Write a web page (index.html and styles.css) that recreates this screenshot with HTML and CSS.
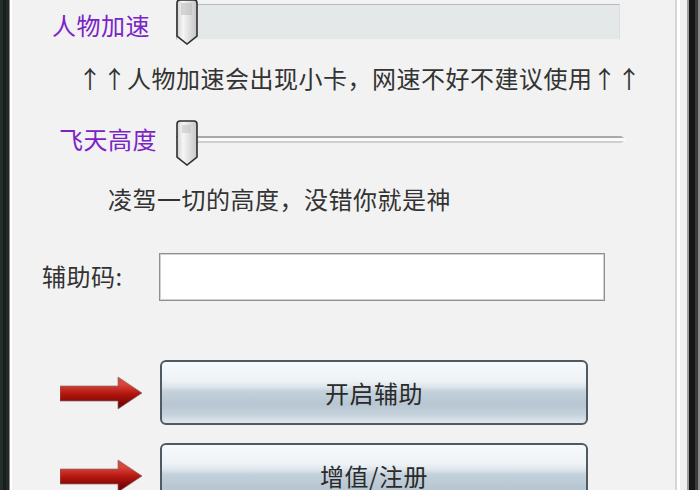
FILE: index.html
```html
<!DOCTYPE html>
<html lang="zh-CN">
<head>
<meta charset="utf-8">
<title>辅助</title>
<link rel="stylesheet" href="styles.css">
</head>
<body>
<div class="window">
  <div class="frame-l"></div>
  <div class="panel">
    <div class="row r1">
      <span class="label l1">人物加速</span>
      <div class="slider s1">
        <div class="track-box"></div>
        <svg class="thumb t1" viewBox="0 0 22 46" width="22" height="46">
          <defs>
            <linearGradient id="tg1" x1="0" y1="0" x2="1" y2="0">
              <stop offset="0" stop-color="#d2d2d2"/>
              <stop offset="0.3" stop-color="#f6f6f6"/>
              <stop offset="0.6" stop-color="#e0e0e0"/>
              <stop offset="1" stop-color="#c4c4c4"/>
            </linearGradient>
          </defs>
          <path d="M4,1 H18 Q21,1 21,4 V37 L11,45 L1,37 V4 Q1,1 4,1 Z" fill="url(#tg1)" stroke="#2e2e2e" stroke-width="1.6"/>
          <rect x="5" y="4" width="11" height="12" fill="#b9b9b9" opacity="0.55"/>
        </svg>
      </div>
    </div>
    <p class="note n1">↑↑人物加速会出现小卡，网速不好不建议使用↑↑</p>
    <div class="row r3">
      <span class="label l2">飞天高度</span>
      <div class="slider s2">
        <div class="groove"></div>
        <svg class="thumb t2" viewBox="0 0 22 46" width="22" height="46">
          <defs>
            <linearGradient id="tg2" x1="0" y1="0" x2="1" y2="0">
              <stop offset="0" stop-color="#d2d2d2"/>
              <stop offset="0.3" stop-color="#f6f6f6"/>
              <stop offset="0.6" stop-color="#e2e2e2"/>
              <stop offset="1" stop-color="#c6c6c6"/>
            </linearGradient>
          </defs>
          <path d="M4,1 H18 Q21,1 21,4 V37 L11,45 L1,37 V4 Q1,1 4,1 Z" fill="url(#tg2)" stroke="#2e2e2e" stroke-width="1.6"/>
          <rect x="6" y="5" width="9" height="8" fill="#bdbdbd" opacity="0.5"/>
        </svg>
      </div>
    </div>
    <p class="note n2">凌驾一切的高度，没错你就是神</p>
    <div class="row r5">
      <label class="code-label" for="code">辅助码:</label>
      <input class="code-input" id="code" type="text">
    </div>
    <div class="row btn-row b1">
      <svg class="arrow" viewBox="0 0 82 65" width="82" height="65">
        <defs>
          <linearGradient id="ag1" gradientUnits="userSpaceOnUse" x1="0" y1="24" x2="0" y2="44">
            <stop offset="0" stop-color="#d8463c"/>
            <stop offset="0.5" stop-color="#b2160f"/>
            <stop offset="1" stop-color="#760505"/>
          </linearGradient>
        </defs>
        <path d="M0,26 H58 V17 L82,33 L58,49 V41 H0 Z" fill="url(#ag1)" stroke="#8d6b6b" stroke-width="0.7"/>
      </svg>
      <button class="btn" type="button">开启辅助</button>
    </div>
    <div class="row btn-row b2">
      <svg class="arrow" viewBox="0 0 82 65" width="82" height="65">
        <defs>
          <linearGradient id="ag2" gradientUnits="userSpaceOnUse" x1="0" y1="24" x2="0" y2="44">
            <stop offset="0" stop-color="#d8463c"/>
            <stop offset="0.5" stop-color="#b2160f"/>
            <stop offset="1" stop-color="#760505"/>
          </linearGradient>
        </defs>
        <path d="M0,26 H58 V17 L82,33 L58,49 V41 H0 Z" fill="url(#ag2)" stroke="#8d6b6b" stroke-width="0.7"/>
      </svg>
      <button class="btn" type="button">增值/注册</button>
    </div>
  </div>
  <div class="gutter"></div>
  <div class="frame-r"></div>
</div>
</body>
</html>
```
FILE: styles.css
```css
html, body {
  margin: 0;
  padding: 0;
  width: 700px;
  height: 490px;
  overflow: hidden;
  background: #f2f2f2;
}

body {
  font-family: "Noto Sans CJK SC", "Noto Sans", sans-serif;
  font-size: 24px;
  letter-spacing: 0.5px;
  color: #333;
}

.window {
  display: flex;
  width: 700px;
  height: 490px;
}

.frame-l {
  width: 9px;
  flex: none;
  background: linear-gradient(to right, #262c29 0 3px, #13201a 3px 6px, #222926 6px);
}

.panel {
  flex: 1;
  min-width: 0;
  border-left: 1px solid #8c8c8c;
  box-shadow: inset 2px 0 0 #ffffff;
  background: #f2f2f2;
  overflow: hidden;
}

.gutter {
  width: 14px;
  flex: none;
  background: linear-gradient(to right, #d6d6d6 0 2px, #ffffff 2px 5px, #efefef 5px 12px, #9c9c9c 12px 14px);
}

.frame-r {
  width: 11px;
  flex: none;
  background: linear-gradient(to right, #161616 0 6px, #3a3a3a 6px 9px, #8a8a8a 9px);
}

.row {
  display: flex;
}

.label {
  display: block;
  line-height: 24px;
  color: #7b23c6;
  flex: none;
}

.r1 {
  height: 44px;
  align-items: flex-start;
}

.l1 {
  width: 124px;
  padding-left: 42px;
  margin-top: 13px;
}

.slider {
  position: relative;
  flex: none;
}

.s1 {
  width: 444px;
  height: 44px;
}

.track-box {
  margin-top: 4px;
  height: 36px;
  box-sizing: border-box;
  border: 1px solid;
  border-color: #b6babc #dcdfe0 #eef0f0 #b6babc;
  background: #e5e8e9;
}

.thumb {
  position: absolute;
  left: 0;
  display: block;
}

.t1 {
  top: -1px;
}

.t2 {
  top: 0;
}

.note {
  margin: 22px 0 0;
  line-height: 24px;
  white-space: nowrap;
}

.n1 {
  padding-left: 68px;
}

.r3 {
  margin-top: 30px;
  height: 45px;
  align-items: flex-start;
}

.l2 {
  width: 117px;
  padding-left: 49px;
  margin-top: 7px;
}

.s2 {
  width: 451px;
  height: 45px;
}

.groove {
  margin-top: 16px;
  height: 3px;
  border-top: 2px solid #a9a9a9;
  border-bottom: 2px solid #cfcfcf;
  background: #fafafa;
  clip-path: polygon(0 0, calc(100% - 6px) 0, 100% 50%, calc(100% - 6px) 100%, 0 100%);
}

.n2 {
  padding-left: 98px;
}

.r5 {
  margin-top: 42px;
  height: 48px;
  align-items: center;
}

.code-label {
  display: block;
  flex: none;
  width: 117px;
  padding-left: 32px;
  line-height: 24px;
  margin-bottom: 2px;
  color: #333;
}

.code-input {
  flex: none;
  width: 446px;
  height: 48px;
  margin: 0;
  box-sizing: border-box;
  border: 1px solid #8f8f8f;
  box-shadow: inset 0 0 0 1px #d2d2d2;
  background: #ffffff;
  outline: none;
}

.btn-row {
  height: 65px;
  align-items: center;
  padding-left: 50px;
  gap: 18px;
}

.b1 {
  margin-top: 59px;
}

.b2 {
  margin-top: 18px;
}

.arrow {
  display: block;
  flex: none;
}

.btn {
  flex: none;
  width: 428px;
  height: 65px;
  margin: 0;
  padding: 0;
  box-sizing: border-box;
  border: 2px solid #505a63;
  border-radius: 6px;
  font-family: "Noto Sans CJK SC", "Noto Sans", sans-serif;
  font-size: 24px;
  letter-spacing: 0.5px;
  line-height: 24px;
  color: #2a2a2a;
  background: linear-gradient(to bottom,
    #f7fafc 0%,
    #eef3f6 30%,
    #dfe7ed 40%,
    #c4d1db 48%,
    #b7c6d2 70%,
    #c5d2dc 86%,
    #e0e8ee 100%);
}
```
